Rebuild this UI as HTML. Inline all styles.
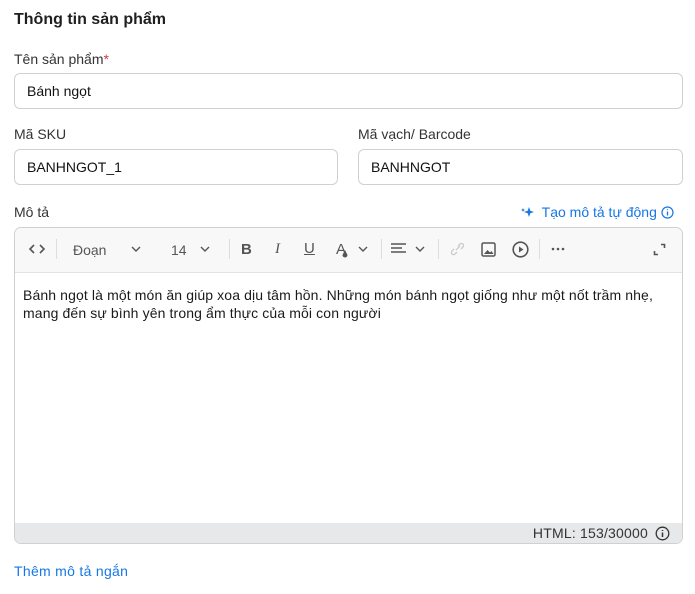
<!DOCTYPE html>
<html><head><meta charset="utf-8"><style>
*{box-sizing:border-box;margin:0;padding:0}
body{width:695px;height:594px;background:#fff;font-family:"Liberation Sans",sans-serif;color:#222;position:relative;overflow:hidden}
.a{position:absolute}
.t{font-size:16px;font-weight:bold;color:#1f1f1f}
.l{font-size:14px;color:#333}
.in{border:1px solid #d0d0d0;border-radius:6px;height:36px;padding:0 12px;line-height:34px;font-size:14px;color:#111}
.blue{color:#1677e6}
.tb{font-size:14px;color:#555}
.sep{width:1px;height:20px;background:#ddd;top:239px}
</style></head><body>
<div class="a t" style="left:14px;top:11px">Thông tin sản phẩm</div>
<div class="a l" style="left:14px;top:51px">Tên sản phẩm<span style="color:#d9363e">*</span></div>
<div class="a in" style="left:14px;top:73px;width:669px">Bánh ngọt</div>
<div class="a l" style="left:14px;top:126px">Mã SKU</div>
<div class="a l" style="left:358px;top:126px">Mã vạch/ Barcode</div>
<div class="a in" style="left:14px;top:149px;width:324px">BANHNGOT_1</div>
<div class="a in" style="left:358px;top:149px;width:325px">BANHNGOT</div>
<div class="a l" style="left:14px;top:204px">Mô tả</div>
<div class="a blue" style="left:520px;top:204px;font-size:14px">
<svg width="18" height="14" viewBox="0 0 18 14" style="vertical-align:-2px"><path d="M9 2 L10.3 5.7 L14 7 L10.3 8.3 L9 12 L7.7 8.3 L4 7 L7.7 5.7Z M3 3 L3.6 4.4 L5 5 L3.6 5.6 L3 7 L2.4 5.6 L1 5 L2.4 4.4Z" fill="#1677e6"/></svg> Tạo mô tả tự động
<svg width="13" height="13" viewBox="0 0 13 13" style="vertical-align:-2px"><circle cx="6.5" cy="6.5" r="5.5" fill="none" stroke="#1677e6" stroke-width="1.2"/><path d="M6.5 5.5v4M6.5 3.3v.8" stroke="#1677e6" stroke-width="1.3"/></svg></div>
<div class="a" style="left:14px;top:227px;width:669px;height:317px;border:1px solid #d0d0d0;border-radius:7px;overflow:hidden">
<div class="a" style="left:0;top:0;width:100%;height:45px;background:#f8f8f8;border-bottom:1px solid #e3e3e3"></div>
<div class="a" style="left:0;top:295px;width:100%;height:21px;background:#e7e8e9"></div>
<div class="a" style="left:8px;top:58px;font-size:14px;line-height:18px;color:#1a1a1a;width:655px;letter-spacing:0.12px">Bánh ngọt là một món ăn giúp xoa dịu tâm hồn. Những món bánh ngọt giống như một nốt trầm nhẹ, mang đến sự bình yên trong ẩm thực của mỗi con người</div>
<div class="a" style="right:34px;top:297px;font-size:14px;color:#333;letter-spacing:0.2px">HTML: 153/30000</div>
<svg class="a" style="right:12px;top:298px" width="15" height="15" viewBox="0 0 15 15"><circle cx="7.5" cy="7.5" r="6.3" fill="none" stroke="#333" stroke-width="1.3"/><path d="M7.5 6.5v4.5M7.5 4v1" stroke="#333" stroke-width="1.5"/></svg>
</div>
<svg class="a" style="left:28px;top:243px" width="18" height="12" viewBox="0 0 18 12"><path d="M6 2 L2 6 L6 10 M12 2 L16 6 L12 10" fill="none" stroke="#555" stroke-width="1.6"/></svg>
<div class="a sep" style="left:56px"></div>
<div class="a tb" style="left:73px;top:242px">Đoạn</div>
<svg class="a" style="left:131px;top:246px" width="10" height="7"><path d="M1 1l4 4 4-4" fill="none" stroke="#555" stroke-width="1.4"/></svg>
<div class="a tb" style="left:171px;top:242px">14</div>
<svg class="a" style="left:200px;top:246px" width="10" height="7"><path d="M1 1l4 4 4-4" fill="none" stroke="#555" stroke-width="1.4"/></svg>
<div class="a sep" style="left:229px"></div>
<div class="a tb" style="left:241px;top:241px;font-weight:bold;font-size:15px">B</div>
<div class="a tb" style="left:275px;top:241px;font-style:italic;font-size:15px;font-family:'Liberation Serif',serif">I</div>
<div class="a tb" style="left:304px;top:240px;text-decoration:underline;font-size:15px">U</div>
<div class="a tb" style="left:336px;top:241px;font-size:15px">A</div>
<svg class="a" style="left:342px;top:250px" width="6" height="8"><path d="M3 0 L5.5 5 A2.5 2.5 0 0 1 0.5 5Z" fill="#555"/></svg>
<svg class="a" style="left:358px;top:246px" width="10" height="7"><path d="M1 1l4 4 4-4" fill="none" stroke="#555" stroke-width="1.4"/></svg>
<div class="a sep" style="left:381px"></div>
<svg class="a" style="left:391px;top:243px" width="16" height="12"><path d="M0 1h15M0 5h11M0 9h15" stroke="#555" stroke-width="1.6"/></svg>
<svg class="a" style="left:415px;top:246px" width="10" height="7"><path d="M1 1l4 4 4-4" fill="none" stroke="#555" stroke-width="1.4"/></svg>
<div class="a sep" style="left:438px"></div>
<svg class="a" style="left:450px;top:242px" width="14" height="14"><path d="M6 8l4-4M4 7l-2 2a2 2 0 0 0 3 3l2-2M8 4l2-2a2 2 0 0 1 3 3l-2 2" fill="none" stroke="#ccc" stroke-width="1.3"/></svg>
<svg class="a" style="left:481px;top:242px" width="15" height="15"><rect x="1" y="1" width="13" height="13" rx="1.5" fill="none" stroke="#555" stroke-width="1.5"/><path d="M3 12l3.5-4 2.5 2.5 1.5-1.5 2 3Z" fill="#555"/></svg>
<svg class="a" style="left:512px;top:241px" width="17" height="17"><circle cx="8.5" cy="8.5" r="7.3" fill="none" stroke="#555" stroke-width="1.6"/><path d="M7 5.5v6l4.5-3Z" fill="#555"/></svg>
<div class="a sep" style="left:539px"></div>
<svg class="a" style="left:551px;top:247px" width="14" height="4"><circle cx="2" cy="2" r="1.3" fill="#555"/><circle cx="7" cy="2" r="1.3" fill="#555"/><circle cx="12" cy="2" r="1.3" fill="#555"/></svg>
<svg class="a" style="left:653px;top:243px" width="13" height="13"><path d="M8 1.5h3.5V5M1.5 8v3.5H5" fill="none" stroke="#555" stroke-width="1.6"/></svg>
<div class="a blue" style="left:14px;top:563px;font-size:14px;letter-spacing:0.3px">Thêm mô tả ngắn</div>
</body></html>
